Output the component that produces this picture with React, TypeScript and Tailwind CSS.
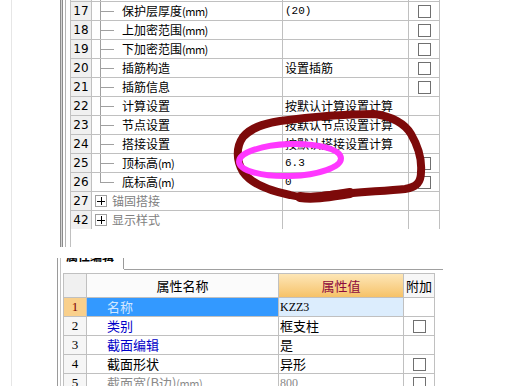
import React from "react";

type TopRow = {
    n: number;
    name: string;
    value?: string;
    mono?: boolean;
    cb?: boolean;
    tree?: "mid" | "last" | "plus";
};

const topRows: TopRow[] = [
    { n: 16, name: "", tree: "mid" },
    { n: 17, name: "保护层厚度(mm)", value: "(20)", mono: true, cb: true, tree: "mid" },
    { n: 18, name: "上加密范围(mm)", cb: true, tree: "mid" },
    { n: 19, name: "下加密范围(mm)", cb: true, tree: "mid" },
    { n: 20, name: "插筋构造", value: "设置插筋", cb: true, tree: "mid" },
    { n: 21, name: "插筋信息", cb: true, tree: "mid" },
    { n: 22, name: "计算设置", value: "按默认计算设置计算", tree: "mid" },
    { n: 23, name: "节点设置", value: "按默认节点设置计算", tree: "mid" },
    { n: 24, name: "搭接设置", value: "按默认搭接设置计算", tree: "mid" },
    { n: 25, name: "顶标高(m)", value: "6.3", mono: true, cb: true, tree: "mid" },
    { n: 26, name: "底标高(m)", value: "0", mono: true, cb: true, tree: "last" },
    { n: 27, name: "锚固搭接", tree: "plus" },
    { n: 42, name: "显示样式", tree: "plus" },
];

type BottomRow = {
    n: number;
    name: string;
    value: string;
    cb: boolean;
    tone: "sel" | "blue" | "black" | "gray";
};

const bottomRows: BottomRow[] = [
    { n: 1, name: "名称", value: "KZZ3", cb: false, tone: "sel" },
    { n: 2, name: "类别", value: "框支柱", cb: true, tone: "blue" },
    { n: 3, name: "截面编辑", value: "是", cb: false, tone: "blue" },
    { n: 4, name: "截面形状", value: "异形", cb: true, tone: "black" },
    { n: 5, name: "截面宽(B边)(mm)", value: "800", cb: true, tone: "gray" },
];

function Checkbox() {
    return <div className="w-[13px] h-[13px] border border-[#707070] bg-white" />;
}

// splits "(mm)" / "(m)" units so they render narrow like the bitmap font
function Label({ text }: { text: string }) {
    const m = text.match(/^(.*?)(\((?:mm|m)\))$/);
    if (!m) return <>{text}</>;
    return (
        <>
            {m[1]}
            <span className="text-[11px] tracking-[-0.5px]">{m[2]}</span>
        </>
    );
}

function TreeMark({ kind }: { kind: TopRow["tree"] }) {
    if (kind === "plus") {
        return (
            <div className="ml-[3px] w-[12px] h-[12px] border border-[#a0a0a0] bg-white flex items-center justify-center">
                <svg width="8" height="8" viewBox="0 0 8 8">
                    <path d="M0 4H8M4 0V8" stroke="#000" strokeWidth="1" shapeRendering="crispEdges" />
                </svg>
            </div>
        );
    }
    return (
        <div className="ml-[8px] w-[14px] h-full flex flex-col">
            <div className="h-[10px] border-l border-b border-[#a0a0a0]" />
            {kind === "mid" && <div className="flex-1 border-l border-[#a0a0a0]" />}
        </div>
    );
}

function TopTable() {
    return (
        <div className="w-[369px] h-[229px] overflow-hidden">
            <div className="-mt-[17px]">
                {topRows.map((r) => (
                    <div key={r.n} className="flex h-[19px] border-b border-[#c0c0c0]">
                        <div className="w-[21px] border-r border-[#c0c0c0] bg-[#f0f0f0] flex items-center justify-center text-[12px] text-[#000] font-['DejaVu_Sans',sans-serif]">
                            {r.n === 16 ? "" : r.n}
                        </div>
                        <div className="w-[191px] border-r border-[#c0c0c0] flex items-center">
                            <TreeMark kind={r.tree} />
                            <span
                                className={`${r.tree === "plus" ? "ml-[5px] text-[#808080]" : "ml-[8px] text-black"} text-[12px] leading-[18px] whitespace-nowrap`}
                            >
                                <Label text={r.name} />
                            </span>
                        </div>
                        <div
                            className={`w-[126px] border-r border-[#c0c0c0] flex items-center pl-[2px] whitespace-nowrap text-black ${
                                r.mono ? "text-[11px] font-['Liberation_Mono',monospace]" : "text-[12px]"
                            }`}
                        >
                            {r.value}
                        </div>
                        <div className="w-[31px] border-r border-[#c0c0c0] flex items-center justify-center">
                            {r.cb && <Checkbox />}
                        </div>
                    </div>
                ))}
            </div>
        </div>
    );
}

function BottomTable() {
    return (
        <div className="ml-[2px] w-[372px] border-l border-t border-[#c0c0c0]">
            <div className="flex h-[24px] border-b border-[#c0c0c0]">
                <div className="w-[23px] border-r border-[#c0c0c0] bg-[#f0f0f0]" />
                <div className="w-[192px] border-r border-[#c0c0c0] bg-[#fbfbfb] flex items-center justify-center text-[13px] text-black">
                    属性名称
                </div>
                <div className="w-[125px] border-r border-[#c0c0c0] bg-gradient-to-b from-[#fde6b6] to-[#f6c267] flex items-center justify-center text-[13px] text-[#8e0a3c]">
                    属性值
                </div>
                <div className="w-[31px] border-r border-[#c0c0c0] bg-[#f7f7f7] flex items-center justify-center text-[13px] text-black">
                    附加
                </div>
            </div>
            {bottomRows.map((r) => {
                const sel = r.tone === "sel";
                const nameColor =
                    r.tone === "sel"
                        ? "text-[#d2e7ff]"
                        : r.tone === "blue"
                        ? "text-[#0000c8]"
                        : r.tone === "gray"
                        ? "text-[#8a8a8a]"
                        : "text-black";
                return (
                    <div key={r.n} className="flex h-[19px] border-b border-[#c0c0c0]">
                        <div
                            className={`w-[23px] border-r border-[#c0c0c0] flex items-center justify-center text-[13px] font-['Liberation_Serif',serif] ${
                                sel ? "bg-[#f9d08c] text-[#800000]" : "bg-[#f6f6f6] text-black"
                            }`}
                        >
                            {r.n}
                        </div>
                        <div
                            className={`w-[192px] border-r border-[#c0c0c0] flex items-center pl-[20px] text-[13px] whitespace-nowrap ${nameColor} ${
                                sel ? "bg-[#3399ff]" : ""
                            }`}
                        >
                            <Label text={r.name} />
                        </div>
                        <div
                            className={`w-[125px] border-r border-[#c0c0c0] flex items-center pl-[1px] whitespace-nowrap ${
                                sel ? "bg-[#dcedfd]" : ""
                            } ${r.tone === "gray" ? "text-[#8a8a8a]" : "text-black"} ${
                                /^[0-9A-Z]+$/.test(r.value)
                                    ? "text-[12px] font-['Liberation_Serif',serif]"
                                    : "text-[13px]"
                            }`}
                        >
                            {r.value}
                        </div>
                        <div className="w-[31px] border-r border-[#c0c0c0] flex items-center justify-center">
                            {r.cb && <Checkbox />}
                        </div>
                    </div>
                );
            })}
        </div>
    );
}

export default function App() {
    return (
        <div className="relative w-[527px] h-[386px] overflow-hidden bg-white flex font-['Noto_Sans_CJK_SC',sans-serif]">
            <div className="w-[11px] shrink-0" />
            <div className="flex-1 flex flex-col border-l border-[#e6e6e6]">
                {/* upper grid */}
                <div className="h-[247px] shrink-0 flex pl-[48px]">
                    <div className="w-[1px] bg-[#8c8c8c]" />
                    <div className="w-[1px] bg-[#d4d4d4]" />
                    <div className="w-[1px] bg-[#8c8c8c]" />
                    <div className="w-[2px]" />
                    <div className="w-[1px] bg-[#b4b4b4]" />
                    <div className="w-[4px]" />
                    <div className="w-[1px] bg-[#c0c0c0]" />
                    <TopTable />
                </div>

                {/* lower property panel */}
                <div className="mt-[11px] ml-[45px] w-[386px] flex-1 flex border-l border-[#9a9a9a]">
                    <div className="w-[2px]" />
                    <div className="w-[1px] bg-[#c4c4c4]" />
                    <div className="flex-1 flex flex-col">
                        <div className="h-[11px] flex">
                            <div className="w-[63px] border-r border-[#9a9a9a] overflow-hidden pl-[5px]">
                                <div className="-mt-[9px] text-[12px] leading-[14px] font-bold text-black whitespace-nowrap">
                                    属性编辑
                                </div>
                            </div>
                        </div>
                        <div className="h-[1px] flex">
                            <div className="w-[63px]" />
                            <div className="flex-1 bg-[#a0a0a0]" />
                        </div>
                        <div className="h-[3px]" />
                        <BottomTable />
                    </div>
                </div>
            </div>

            {/* hand-drawn marks */}
            <svg className="absolute inset-0 pointer-events-none" width="527" height="386" viewBox="0 0 527 386">
                <path
                    d="M243 137 C250 128 262 124 280 121 C310 117 345 114 374 114 C392 116 405 124 411 134 C418 146 422 160 421 172 C421 182 417 187 405 189 C385 191 360 192 330 195 C315 197 305 199 290 195 C270 191 252 185 243 172 C236 160 236 147 243 137 C250 130 258 126 266 124"
                    fill="none"
                    stroke="#7d0a0a"
                    strokeWidth="8"
                    strokeLinecap="round"
                    strokeLinejoin="round"
                />
                <path
                    d="M300 197 C315 199 330 196 350 193"
                    fill="none"
                    stroke="#7d0a0a"
                    strokeWidth="10"
                    strokeLinecap="round"
                />
                <ellipse
                    cx="290"
                    cy="160"
                    rx="51"
                    ry="16"
                    fill="none"
                    stroke="#ff38ff"
                    strokeWidth="6"
                    transform="rotate(-2 290 160)"
                />
            </svg>
        </div>
    );
}
